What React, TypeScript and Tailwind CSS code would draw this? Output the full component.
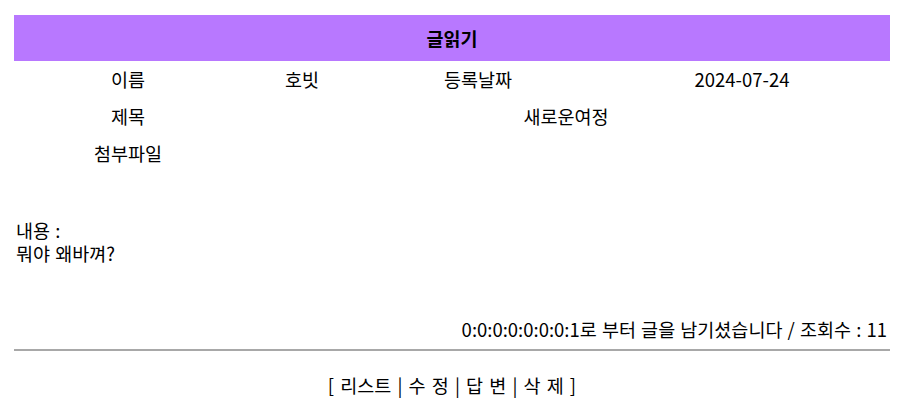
import React from 'react';

const post = {
  name: '호빗',
  date: '2024-07-24',
  subject: '새로운여정',
  content: '뭐야 왜바껴?',
  ip: '0:0:0:0:0:0:0:1',
  count: 11,
};

export default function App() {
  return (
    <div className="bg-white min-h-[411px] pt-[15px] text-black text-[18.5px] leading-[23px] [font-family:'Noto_Sans_CJK_KR',sans-serif]">
      <div className="ml-[14px] w-[876px]">
        <div className="h-[46px] bg-[#b878ff] flex items-center justify-center font-bold text-[18.5px]">글읽기</div>

        <div className="grid grid-cols-[228px_120px_232px_296px]">
          <div className="h-[37px] flex items-center justify-center">이름</div>
          <div className="h-[37px] flex items-center justify-center">{post.name}</div>
          <div className="h-[37px] flex items-center justify-center">등록날짜</div>
          <div className="h-[37px] flex items-center justify-center">{post.date}</div>

          <div className="h-[37px] flex items-center justify-center">제목</div>
          <div className="h-[37px] col-span-3 flex items-center justify-center">{post.subject}</div>

          <div className="h-[37px] flex items-center justify-center">첨부파일</div>
          <div className="h-[37px] col-span-3" />
        </div>

        <div className="mt-[47px] pl-[2px] [word-spacing:1px]">
          <p>내용 :</p>
          <p>{post.content}</p>
        </div>

        <p className="mt-[53px] text-right pr-[3px] [word-spacing:1px]">
          {post.ip}로 부터 글을 남기셨습니다 / 조회수 : {post.count}
        </p>

        <hr className="mt-[8px] border-0 h-[2px] bg-[#a8a8a8]" />

        <div className="mt-[23px] text-center [word-spacing:2px]">
          [ 리스트 | 수 정 | 답 변 | 삭 제 ]
        </div>
      </div>
    </div>
  );
}
